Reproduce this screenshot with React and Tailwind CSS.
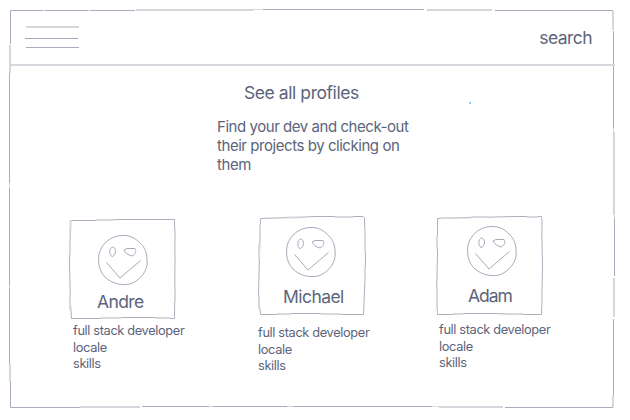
const PROFILES = [
  {
    name: 'Andre',
    frame: 'M2.500 3.500 L4 2.500 H30 L52 1.500 H106.500 L107 40 L106.500 100.500 H96 L85 99.500 H45 L30 100.500 H3.500 L2.500 85 L1.500 45 Z',
    soft: 'M2.500 2 V12 M2 22 V36 M2 78 V92 M34 100 H53 M93 100 H102 M107 12 V24 M107 68 V84 M28 2 H42',
    box: 'mt-[3px]',
    face: 'ml-[29px] mt-[16px]',
    label: 'ml-[29px] mt-[5px] tracking-[-0.6px]',
    details: 'ml-[5px] mt-[3px]',
  },
  {
    name: 'Michael',
    frame: 'M3.500 3.500 L35 2.500 L60 1.500 H106 L107.500 3 L108.500 45 L107.500 75 L106.500 99.500 H90 L60 98.500 H35 L20 99.500 H3.500 L1.500 80 L2.500 40 Z',
    soft: 'M2 30 V44 M3 10 V22 M108 14 V36 M108 54 V66 M78 2 H96 M30 2.500 H42 M20 99 H34 M64 99 H82 M2 82 V94',
    box: '',
    face: 'ml-[28px] mt-[11px]',
    label: 'ml-[26px] mt-[8px] tracking-[-0.55px]',
    details: 'ml-[1px] mt-[8px]',
  },
  {
    name: 'Adam',
    frame: 'M2.500 3.500 L40 2.500 L80 1.500 H106.500 L107.500 50 L106.500 99.500 H85 L60 98.500 H30 L20 99.500 H2.500 L1.500 80 L2.500 40 Z',
    soft: 'M2 20 V34 M2 74 V86 M6 3 H16 M36 2 H52 M92 2 H103 M107 4 V16 M107 72 V90 M18 99 H28 M76 99 H88',
    box: '',
    face: 'ml-[31px] mt-[10px]',
    label: 'ml-[33px] mt-[8px] tracking-[-1.05px]',
    details: 'ml-[4px] mt-[5px]',
  },
]

function Face({ className }) {
  return (
    <svg className={`block h-[52px] w-[52px] ${className}`} viewBox="0 0 52 52" fill="none" stroke="#aaa9b9" strokeWidth="1">
      <path d="M25 1.500 C34 1 39 5 43 9 C48 13 50 20 50 25 C52 36 43 47 33 50 C24 52 14 49 8 43 C2 37 .8 28 2 20 C5 9 14 2 25 1.500 Z" />
      <path d="M15.500 13 C12 14 12 21 15 22.500 C19 22 20 13.500 15.500 13 Z" />
      <path d="M27 16 L30 14.500 H38 C39.500 17 39 20 35 22 C31 21 28 18.500 27 16 Z" />
      <path d="M9.500 28.500 L23 44 L43.500 26.500" />
    </svg>
  )
}

function Profile({ profile }) {
  return (
    <article className="w-[110px] shrink-0">
      <div className={`relative h-[102px] ${profile.box}`}>
        <svg className="absolute inset-0 h-[102px] w-[110px]" viewBox="0 0 110 102" fill="none">
          <path d={profile.frame} stroke="#b0afbd" />
          <path d={profile.soft} stroke="#d9d8df" strokeWidth="2" />
        </svg>
        <div className="flow-root">
          <Face className={profile.face} />
          <h2 className={`text-[17.5px] leading-[22px] ${profile.label}`}>{profile.name}</h2>
        </div>
      </div>
      <ul className={`whitespace-nowrap text-[12.8px] leading-[16.5px] tracking-[-0.36px] ${profile.details}`}>
        <li>full stack developer</li>
        <li>locale</li>
        <li>skills</li>
      </ul>
    </article>
  )
}

export default function App() {
  return (
    <div className="relative h-[420px] w-[630px] overflow-hidden bg-white font-['Inter',sans-serif] text-[#5b647a]">
      <svg className="absolute inset-0 h-full w-full" viewBox="0 0 630 420" fill="none" stroke="#acabbb">
        <path d="M10.500 44 V10.500 H135 M263 9.500 H424 M495 10.500 H613 M613.500 31 V128 M614.500 218 V276 M613.500 319 V395 M9.500 73 V364 M10.500 382 V407.500 H80 M142 406.500 H432 M505 407.500 H613" />
        <path d="M136 10 H253 M427 10 H492 M613 11 V30 M10 45 V73 M10 364 V382 M80 407 H140 M439 407 H503 M613 395 V407 M614 132 V215 M614 278 V317" stroke="#d7d6dd" strokeWidth="2" />
        <path d="M253 9.500 H263 M43 10.500 H45 M88 10.500 H90 M9.500 183 V188 M9.500 286 V288 M209 406.500 H213 M287 406.500 H293 M432 406.500 H439 M613.500 128 V132 M614.500 215 V218" stroke="#d9d8df" />
        <path d="M9 65 H615" stroke="#d7d6dd" strokeWidth="2" />
      </svg>
      <header className="flex h-[65px] items-start justify-between pl-[25px] pr-[38px]">
        <svg className="mt-[24px] h-[26px] w-[56px]" viewBox="0 0 56 26" fill="none">
          <path d="M1 3 H54" stroke="#d7d6dd" strokeWidth="2" />
          <path d="M0 14.500 H53" stroke="#a6a9b5" />
          <path d="M1 23.500 H54" stroke="#acabbb" />
        </svg>
        <span className="mt-[27px] text-[17.5px] leading-[22px] tracking-[-0.55px]">search</span>
      </header>
      <main>
        <section className="ml-[217px] flow-root">
          <h1 className="ml-[27px] mt-[17px] text-[17.5px] leading-[22px] tracking-[-0.43px]">See all profiles</h1>
          <p className="mt-[13px] whitespace-nowrap text-[15px] leading-[19px] tracking-[-0.45px]">
            Find your dev and check-out<br />their projects by clicking on<br />them
          </p>
        </section>
        <div className="mt-[41px] flex pl-[68px]">
          <Profile profile={PROFILES[0]} />
          <div className="ml-[79px]"><Profile profile={PROFILES[1]} /></div>
          <div className="ml-[68px]"><Profile profile={PROFILES[2]} /></div>
        </div>
      </main>
      <span className="absolute left-[469px] top-[102px] h-0.5 w-0.5 bg-[#91c9f3]" />
    </div>
  )
}
